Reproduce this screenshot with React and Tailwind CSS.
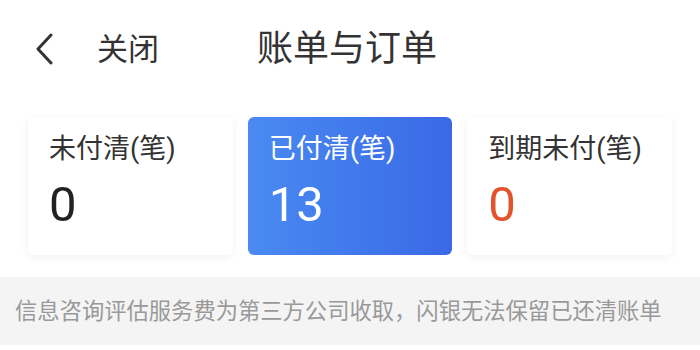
export default function App() {
  const cjk = { fontFamily: 'Roboto, "Noto Sans CJK SC", sans-serif' };
  return (
    <div className="w-[700px] h-[350px] bg-white overflow-hidden" style={cjk}>
      {/* Header */}
      <div className="h-[95px] flex items-center pt-[3px]">
        <svg className="ml-[33px] w-[22px] h-[32px]" viewBox="0 0 22 32" fill="none">
          <path d="M18 2 L5 16 L18 30" stroke="#333" strokeWidth="3" strokeLinecap="round" strokeLinejoin="round" />
        </svg>
        <span className="ml-[42px] text-[31px] leading-none text-[#333]">关闭</span>
        <span className="ml-[98px] text-[36px] leading-none text-[#333]">账单与订单</span>
      </div>

      {/* Stats */}
      <div className="flex gap-[15px] px-[28px] pt-[22px]">
        <div className="w-[205px] h-[138px] rounded-[6px] bg-white shadow-[0_2px_10px_rgba(0,0,0,0.06)] pl-[21px] pt-[14px]">
          <div className="text-[27px] leading-[36px] text-[#333]">未付清(笔)</div>
          <div className="text-[49px] leading-[64px] mt-[6px] text-[#222]">0</div>
        </div>
        <div className="w-[205px] h-[138px] rounded-[6px] bg-gradient-to-r from-[#4a8af2] to-[#3a69e6] pl-[21px] pt-[14px]">
          <div className="text-[27px] leading-[36px] text-white">已付清(笔)</div>
          <div className="text-[49px] leading-[64px] mt-[6px] text-white">13</div>
        </div>
        <div className="w-[205px] h-[138px] rounded-[6px] bg-white shadow-[0_2px_10px_rgba(0,0,0,0.06)] pl-[21px] pt-[14px]">
          <div className="text-[27px] leading-[36px] text-[#333]">到期未付(笔)</div>
          <div className="text-[49px] leading-[64px] mt-[6px] text-[#e2522b]">0</div>
        </div>
      </div>

      {/* Notice */}
      <div className="mt-[22px] h-[68px] bg-[#f4f4f4] flex items-center pl-[15px]">
        <span className="text-[22.3px] leading-none text-[#999] whitespace-nowrap">信息咨询评估服务费为第三方公司收取，闪银无法保留已还清账单</span>
      </div>
    </div>
  );
}
